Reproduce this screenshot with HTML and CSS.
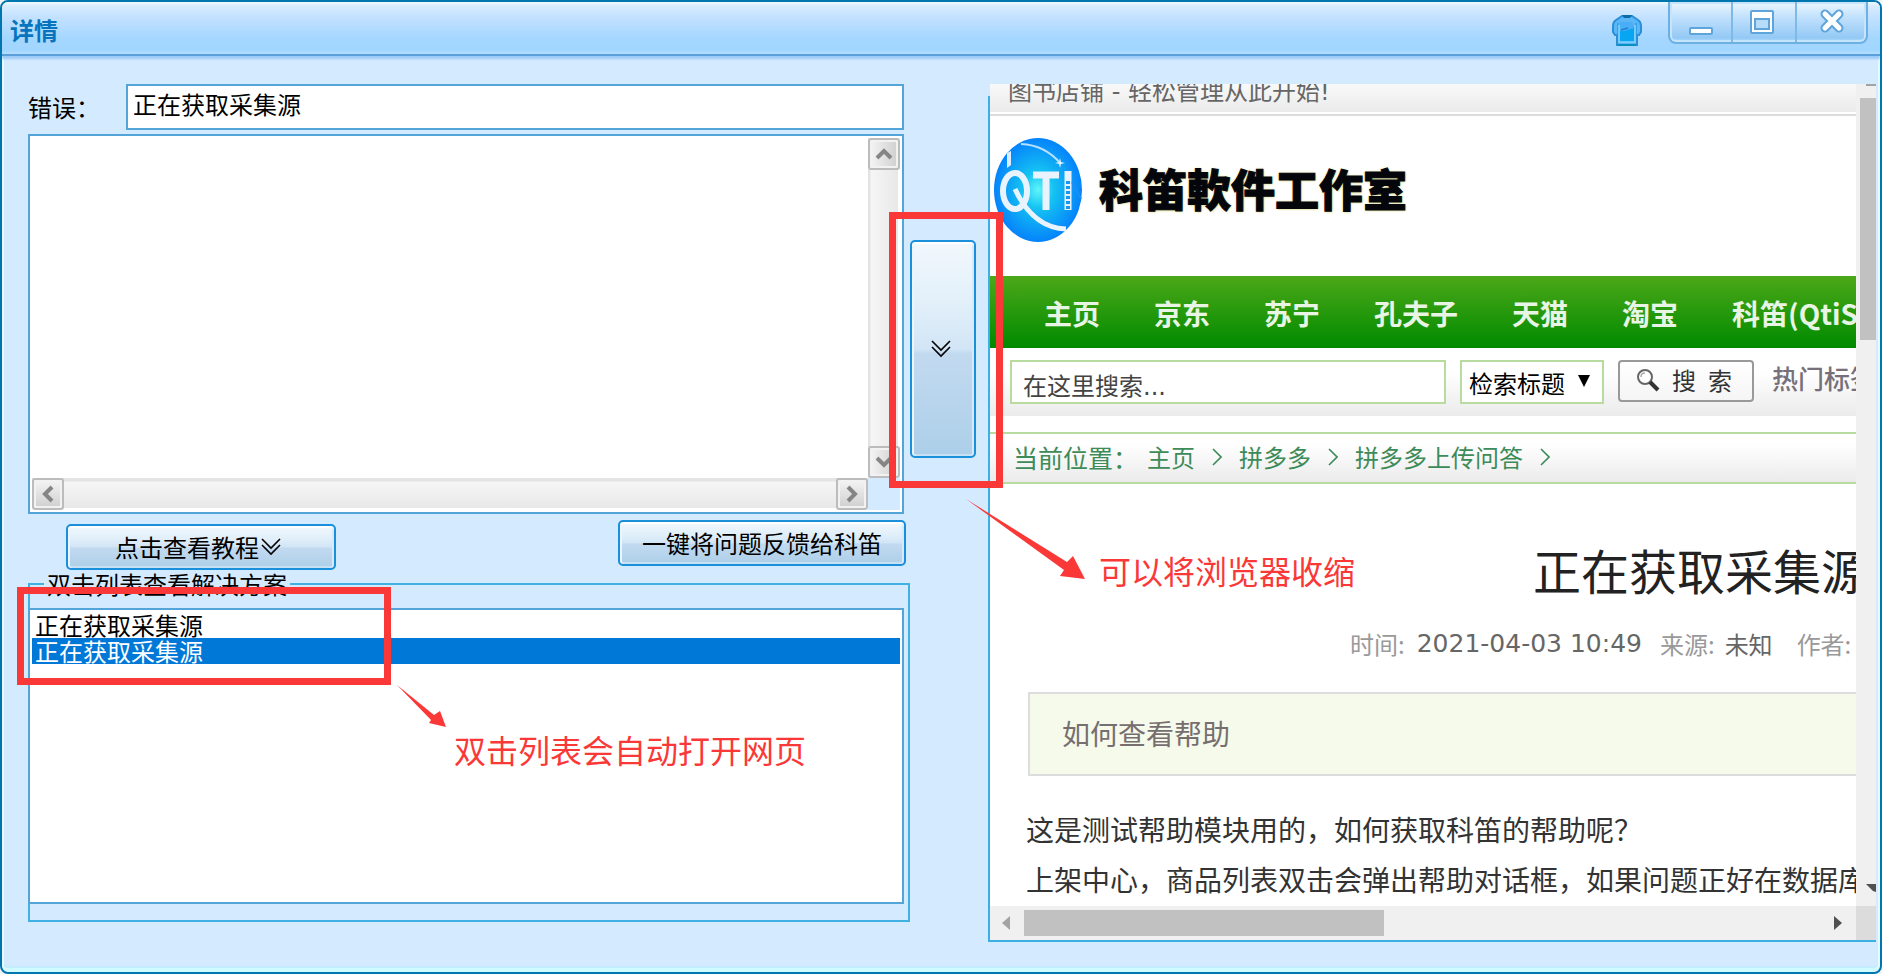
FILE: index.html
```html
<!DOCTYPE html>
<html lang="zh-CN">
<head>
<meta charset="utf-8">
<title>详情</title>
<link rel="stylesheet" href="styles.css">
</head>
<body>
<div class="window">
  <header class="titlebar">
    <h1 class="titlebar-text">详情</h1>
    <button class="skin" type="button" aria-label="换肤">
      <svg width="30" height="32" viewBox="0 0 30 32">
        <path d="M10 2 L4 6 Q1 8 1 12 V18 L3 21 H5 V31 H25 V21 H27 L29 18 V12 Q29 8 26 6 L20 2 Z" fill="#5ab6f6" stroke="#2a8fd6" stroke-width="2"/>
        <path d="M6 9 V22 M24 9 V22" stroke="#2a9be4" stroke-width="1.5"/>
        <rect x="8" y="12" width="14" height="16" fill="#08a6f2"/>
        <path d="M8 8 H20 L22 14 L12 17 H8 Z" fill="#4aaef6"/>
        <path d="M9 16 L16 14" stroke="#1c7fd0" stroke-width="1.5"/>
        <path d="M7 11 V28 H23 V11" fill="none" stroke="#8ad2fb" stroke-width="1.5"/>
        <path d="M10 1 H20 L18 4 H12 Z" fill="#0a6ca8"/>
        <path d="M6 31 H24" stroke="#078fc0" stroke-width="2"/>
      </svg>
    </button>
    <div class="window-buttons">
      <button class="window-button" type="button" aria-label="最小化">
        <svg width="26" height="26" viewBox="0 0 26 26"><rect x="2" y="19" width="22" height="6" rx="1" fill="#fff" stroke="#5fa5dc" stroke-width="2"/></svg>
      </button>
      <button class="window-button window-button-max" type="button" aria-label="最大化">
        <svg width="26" height="26" viewBox="0 0 26 26"><rect x="2" y="2" width="22" height="22" rx="1" fill="#fff" stroke="#5fa5dc" stroke-width="2"/><rect x="6" y="10" width="14" height="10" fill="#b7dcfa" stroke="#5fa5dc" stroke-width="2"/></svg>
      </button>
      <button class="window-button window-button-close" type="button" aria-label="关闭">
        <svg width="26" height="26" viewBox="0 0 26 26"><path d="M6 5 L20 19 M20 5 L6 19" stroke="#5fa5dc" stroke-width="9" stroke-linecap="round"/><path d="M6 5 L20 19 M20 5 L6 19" stroke="#fff" stroke-width="5" stroke-linecap="round"/></svg>
      </button>
    </div>
  </header>

  <main class="content">
    <section class="left">
      <div class="error-row">
        <label class="error-label" for="error">错误：</label>
        <input class="error-input" id="error" type="text" value="正在获取采集源">
      </div>
      <div class="log">
        <textarea class="log-text" aria-label="日志"></textarea>
        <div class="vbar">
          <button class="bar-button" type="button" aria-label="向上"><svg width="18" height="14" viewBox="0 0 18 14"><path d="M2 11 L9 4 L16 11" fill="none" stroke="#858585" stroke-width="4"/></svg></button>
          <button class="bar-button" type="button" aria-label="向下"><svg width="18" height="14" viewBox="0 0 18 14"><path d="M2 3 L9 10 L16 3" fill="none" stroke="#858585" stroke-width="4"/></svg></button>
        </div>
        <div class="hbar">
          <button class="bar-button" type="button" aria-label="向左"><svg width="14" height="18" viewBox="0 0 14 18"><path d="M11 2 L4 9 L11 16" fill="none" stroke="#858585" stroke-width="4"/></svg></button>
          <button class="bar-button" type="button" aria-label="向右"><svg width="14" height="18" viewBox="0 0 14 18"><path d="M3 2 L10 9 L3 16" fill="none" stroke="#858585" stroke-width="4"/></svg></button>
        </div>
      </div>
      <div class="actions">
        <button class="blue-button tutorial" type="button">点击查看教程<svg class="chevrons" width="20" height="18" viewBox="0 0 20 18"><path d="M1 1 L10 10 L19 1 M1 7 L10 16 L19 7" fill="none" stroke="#000" stroke-width="1.6"/></svg></button>
        <button class="blue-button feedback" type="button">一键将问题反馈给科笛</button>
      </div>
      <fieldset class="group">
        <legend class="group-title">双击列表查看解决方案</legend>
        <ul class="list">
          <li class="row">正在获取采集源</li>
          <li class="row row-selected">正在获取采集源</li>
        </ul>
      </fieldset>
    </section>

    <div class="divider">
      <button class="blue-button collapse" type="button" aria-label="收缩浏览器"><svg width="20" height="18" viewBox="0 0 20 18"><path d="M1 1 L10 10 L19 1 M1 7 L10 16 L19 7" fill="none" stroke="#000" stroke-width="1.6"/></svg></button>
    </div>

    <section class="browser">
      <div class="page">
        <div class="slogan"><span>图书店铺 - 轻松管理从此开始!</span></div>
        <div class="brand">
          <svg class="brand-logo" width="90" height="106" viewBox="0 0 90 106">
            <defs><radialGradient id="globe"><stop offset="0" stop-color="#5ff5fb"/><stop offset=".35" stop-color="#15c3f2"/><stop offset="1" stop-color="#0583fb"/></radialGradient></defs>
            <ellipse cx="45" cy="53" rx="44" ry="52" fill="url(#globe)"/>
            <path d="M28 7 Q52 8 68 27" fill="none" stroke="#b9e0ff" stroke-width="2"/>
            <path d="M14 16 L18 14 L18 28 L14 31 Z" fill="#dceeff"/>
            <path d="M67 21 L68 25 L72 26 L68 27 L67 31 L66 27 L62 26 L66 25 Z" fill="#d8f2ff"/>
            <ellipse cx="22" cy="54" rx="12" ry="18" fill="none" stroke="#e8f3fd" stroke-width="6"/>
            <path d="M22 52 Q40 91 73 92" fill="none" stroke="#e8f3fd" stroke-width="5"/>
            <path d="M40 38 H66 M53 38 V73" stroke="#e8f3fd" stroke-width="7"/>
            <path d="M75 34 V73" stroke="#e8f3fd" stroke-width="7"/>
            <path d="M75 44 V72" stroke="#1597f5" stroke-width="4" stroke-dasharray="3 2"/>
            <path d="M79 45 L88 62" stroke="#1c8df5" stroke-width="2"/>
          </svg>
          <span class="brand-name">科笛軟件工作室</span>
        </div>
        <nav class="nav">
          <a class="nav-link" href="#">主页</a><a class="nav-link" href="#">京东</a><a class="nav-link" href="#">苏宁</a><a class="nav-link" href="#">孔夫子</a><a class="nav-link" href="#">天猫</a><a class="nav-link" href="#">淘宝</a><a class="nav-link" href="#">科笛(QtiSoft)</a>
        </nav>
        <form class="search">
          <input class="search-input" type="text" aria-label="搜索" value="在这里搜索...">
          <div class="search-type">
            <select class="search-select" aria-label="检索范围"><option>检索标题</option></select>
            <svg class="search-arrow" width="12" height="12" viewBox="0 0 12 12"><path d="M0 0 H12 L6 12 Z"/></svg>
          </div>
          <button class="search-button" type="button">
            <svg width="24" height="24" viewBox="0 0 24 24"><circle cx="9" cy="9" r="7" fill="#fff" stroke="#666" stroke-width="2"/><path d="M5 9 Q5 5 9 5" fill="none" stroke="#aaa" stroke-width="1.5"/><path d="M14 14 L22 22" stroke="#333" stroke-width="4"/></svg>
            <span>搜</span><span>索</span>
          </button>
          <span class="hot">热门标签:</span>
        </form>
        <div class="crumbs">
          <span class="crumbs-label">当前位置：</span>
          <a class="crumb" href="#">主页</a>
          <svg class="crumb-sep" width="10" height="18" viewBox="0 0 10 18"><path d="M1 1 L9 9 L1 17" fill="none" stroke="#3d8b58" stroke-width="1.6"/></svg>
          <a class="crumb" href="#">拼多多</a>
          <svg class="crumb-sep" width="10" height="18" viewBox="0 0 10 18"><path d="M1 1 L9 9 L1 17" fill="none" stroke="#3d8b58" stroke-width="1.6"/></svg>
          <a class="crumb" href="#">拼多多上传问答</a>
          <svg class="crumb-sep" width="10" height="18" viewBox="0 0 10 18"><path d="M1 1 L9 9 L1 17" fill="none" stroke="#3d8b58" stroke-width="1.6"/></svg>
        </div>
        <article class="article">
          <h2 class="article-title">正在获取采集源</h2>
          <div class="meta">
            <span>时间:</span><b class="meta-date">2021-04-03 10:49</b>
            <span>来源:</span><b class="meta-value">未知</b>
            <span>作者:</span>
          </div>
          <div class="summary">如何查看帮助</div>
          <p class="paragraph">这是测试帮助模块用的，如何获取科笛的帮助呢？</p>
          <p class="paragraph">上架中心，商品列表双击会弹出帮助对话框，如果问题正好在数据库</p>
        </article>
      </div>
      <div class="page-vbar">
        <span class="page-vbar-top"></span>
        <span class="page-vthumb"></span>
        <svg class="page-down" width="10" height="8" viewBox="0 0 10 8"><path d="M0 0 H10 V8 L7 7 Z" fill="#505050"/></svg>
      </div>
      <div class="page-hbar">
        <svg width="8" height="14" viewBox="0 0 8 14"><path d="M8 0 V14 L0 7 Z" fill="#a3a3a3"/></svg>
        <span class="page-htrack"><span class="page-hthumb"></span></span>
        <svg width="8" height="14" viewBox="0 0 8 14"><path d="M0 0 V14 L8 7 Z" fill="#505050"/></svg>
      </div>
      <div class="page-corner"></div>
    </section>
  </main>

  <div class="mark mark-collapse"></div>
  <div class="mark mark-list"></div>
  <svg class="arrow arrow-collapse" width="120" height="82" viewBox="0 0 120 82"><path d="M0 0 L101 63 L107 57 L119 80 L94 77 L98 71 Z" fill="#fb3838"/></svg>
  <svg class="arrow arrow-list" width="50" height="43" viewBox="0 0 50 43"><path d="M0 0 L37 30 L43 26 L49 42 L32 38 L34 35 Z" fill="#fb3838"/></svg>
  <span class="note note-collapse">可以将浏览器收缩</span>
  <span class="note note-list">双击列表会自动打开网页</span>
</div>
</body>
</html>
```
FILE: styles.css
```css
* { box-sizing: border-box; }

body {
  margin: 0;
  background: #eef3f6;
  color: #000;
  font: 24px/28px "Noto Sans CJK SC", sans-serif;
}

button, input, select, textarea {
  margin: 0;
  padding: 0;
  border: 0;
  background: none;
  color: inherit;
  font: inherit;
  outline: 0;
}

button svg { flex: none; }
a { color: inherit; text-decoration: none; }

.window {
  position: relative;
  display: flex;
  flex-direction: column;
  min-height: 100vh;
  border: 2px solid #0076ae;
  border-radius: 8px;
  background: #d4eaff;
  box-shadow: inset 2px 0 #e8f8ff, inset -2px 0 #e8f8ff, inset 0 -4px #d0fbff, inset 0 -6px #c4ecff;
  overflow: hidden;
}

/* Title bar */
.titlebar {
  display: flex;
  align-items: center;
  height: 54px;
  padding: 0 12px 0 8px;
  border-bottom: 2px solid #5ba0da;
  background: linear-gradient(#f0faff 0, #d8ecff 4px, #c2e1ff 16px, #a5d7ff 36px, #a1d6ff 48px, #b4deff 52px);
  box-shadow: 0 3px 2px #9ccbf8;
}

.titlebar-text {
  flex: 1;
  margin: 0;
  padding-top: 4px;
  color: #0874bd;
  font-size: 24px;
  line-height: 28px;
}

.skin { display: flex; margin: 4px 26px 0 0; }

.window-buttons {
  display: flex;
  align-self: flex-start;
  height: 42px;
  border: 2px solid #6fb0e2;
  border-top: 0;
  border-radius: 0 0 8px 8px;
  background: linear-gradient(#ecf7ff, #bfe0fc 16px, #93c9f5 36px, #b5e0ff);
  box-shadow: inset 0 0 0 2px #c5e4fd;
}

.window-button {
  display: flex;
  justify-content: center;
  width: 61px;
  padding-top: 7px;
}

.window-button + .window-button { border-left: 2px solid #7fb9e6; }
.window-button-max { width: 64px; padding-right: 4px; }
.window-button-close { width: 71px; }

/* Main columns */
.content {
  flex: 1;
  display: grid;
  grid-template-columns: minmax(0, 882fr) 78px minmax(0, 888fr);
  padding: 28px 4px 30px 26px;
}

.left {
  display: flex;
  flex-direction: column;
  padding-bottom: 20px;
}

.error-row { display: flex; align-items: center; margin-right: 6px; }
.error-label { width: 98px; white-space: nowrap; }

.error-input {
  flex: 1;
  min-width: 0;
  height: 46px;
  padding: 0 5px 8px;
  border: 2px solid #53a4d8;
  background: #fff;
}

.log {
  display: grid;
  grid-template: 1fr 32px / 1fr 32px;
  height: 380px;
  margin: 4px 6px 0 0;
  padding: 2px;
  border: 2px solid #53a4d8;
  background: linear-gradient(#fff, #fff) padding-box;
}

.log-text { width: 100%; height: 100%; resize: none; }

.vbar, .hbar { display: flex; justify-content: space-between; }

.vbar {
  flex-direction: column;
  background: linear-gradient(90deg, #e4e4e4 2px, #f6f6f6 3px, #e8e8e8 30px, #fff 30px);
}

.hbar { background: linear-gradient(#e4e4e4 3px, #f6f6f6 4px, #e8e8e8 30px, #fff 30px); }

.bar-button {
  display: flex;
  align-items: center;
  justify-content: center;
  width: 32px;
  height: 32px;
  border: 2px solid #bcbcbc;
  border-radius: 3px;
  background: linear-gradient(90deg, #f4f4f4, #cfcfcf);
  box-shadow: inset 0 0 0 2px #f2f2f2;
}

.hbar .bar-button { background: linear-gradient(#f4f4f4, #cfcfcf); }

.log::after { content: ""; background: #d4eaff; }

.actions {
  display: flex;
  justify-content: space-between;
  align-items: flex-start;
  padding: 6px 4px 0 38px;
}

.blue-button {
  display: flex;
  align-items: center;
  justify-content: center;
  height: 46px;
  border: 2px solid #1a8fda;
  border-radius: 5px;
  background: linear-gradient(#f2f8fd, #e2f0fa 28%, #d2e5f6 50%, #c2daf0 52%, #adcfe9);
  box-shadow: inset 0 2px #fff, inset 2px 0 #eaf5fd, inset -2px 0 #d8eafa, inset 0 -2px #c8e0f4;
  white-space: nowrap;
}

.tutorial { width: 270px; margin-top: 4px; padding-right: 6px; }
.feedback { width: 288px; }
.chevrons { margin-left: 2px; }

.group {
  flex: 1;
  display: flex;
  flex-direction: column;
  min-width: 0;
  margin: 0;
  padding: 10px 4px 16px 0;
  border: 2px solid #41b0e2;
}

.group-title { margin-left: 14px; padding: 0 3px; white-space: nowrap; }

.list {
  flex: 1;
  margin: 0 0 0 -2px;
  padding: 2px;
  border: 2px solid #53a4d8;
  background: #fff;
  list-style: none;
}

.row { padding-left: 3px; line-height: 26px; }
.row-selected { background: #0078d7; color: #fff; }

.divider { padding: 156px 12px 0 0; }
.collapse { width: 66px; height: 218px; padding-right: 4px; }

/* Embedded browser */
.browser {
  display: grid;
  grid-template: minmax(0, 1fr) 34px / minmax(0, 1fr) 20px;
  border: solid #3cb0e2;
  border-width: 0 0 2px 2px;
  border-image: linear-gradient(#d4eaff 12px, #3cb0e2 12px) 0 0 2 2;
}

.page { overflow: hidden; background: #fff; white-space: nowrap; }

.slogan {
  display: flex;
  align-items: flex-end;
  height: 32px;
  padding: 0 18px 8px;
  border-bottom: 2px solid #dcdcdc;
  background: linear-gradient(#f9f9f9, #ebebeb 28px, #fff 28px);
  color: #666;
  font-family: "DejaVu Sans", "Noto Sans CJK SC", sans-serif;
}

.brand {
  display: flex;
  align-items: center;
  gap: 16px;
  height: 160px;
  padding: 0 0 12px 3px;
}

.brand-name {
  padding-bottom: 4px;
  color: #05050c;
  font: 900 44px/48px "Noto Sans CJK TC", sans-serif;
  -webkit-text-stroke: 1px #05050c;
  text-shadow: 0 0 3px #dcdc90, 1px 1px 2px #e4e4ac;
}

.nav {
  display: flex;
  align-items: center;
  gap: 54px;
  height: 72px;
  padding: 2px 54px 0;
  background: linear-gradient(#4ca818, #008a00);
  color: #e8f4e4;
  font-size: 28px;
  font-weight: 700;
}

.search {
  display: flex;
  align-items: flex-start;
  gap: 14px;
  height: 68px;
  padding: 12px 20px 0;
  background: linear-gradient(#fff 35%, #ebebeb);
}

.search-input, .search-select {
  flex: none;
  height: 44px;
  border: 2px solid #b8dba0;
  background: #fff;
}

.search-input {
  width: 436px;
  padding: 4px 11px 0;
  color: #444;
  font-family: "DejaVu Sans", "Noto Sans CJK SC", sans-serif;
}

.search-type { position: relative; flex: none; }
.search-select { width: 144px; padding: 2px 7px 0; appearance: none; color: #000; }
.search-arrow { position: absolute; right: 14px; top: 15px; pointer-events: none; }

.search-button {
  flex: none;
  display: flex;
  align-items: center;
  gap: 12px;
  width: 136px;
  height: 42px;
  padding: 0 0 2px 16px;
  border: 2px solid #999;
  border-radius: 4px;
  background: linear-gradient(#fff, #f5f5f5);
  color: #333;
}

.hot { padding: 4px 0 0 4px; color: #77707a; font-size: 26px; font-weight: 500; }

.crumbs {
  display: flex;
  align-items: center;
  height: 52px;
  margin-top: 16px;
  padding: 0 0 2px 23px;
  border: solid #b8dba0;
  border-width: 2px 0;
  background: linear-gradient(#fff 20%, #ebebeb);
  color: #3d8b58;
}

.crumbs-label { width: 134px; font-size: 25px; }
.crumb-sep { margin: 0 17px; }

.article { padding: 56px 0 0 36px; }

.article-title {
  margin: 0 0 0 507px;
  color: #222;
  font-size: 48px;
  font-weight: 400;
  line-height: 58px;
}

.meta {
  display: flex;
  padding: 32px 0 0 324px;
  color: #999;
}

.meta-date, .meta-value { color: #666; font-weight: 400; }
.meta-date { margin: 0 18px 0 12px; font-family: "DejaVu Sans", sans-serif; font-size: 25px; }
.meta-value { margin: 0 24px 0 10px; }

.summary {
  height: 84px;
  margin: 34px 0 28px 2px;
  padding: 0 32px;
  border: 2px solid #ddd;
  border-right: 0;
  background: #f5faeb;
  color: #776e70;
  font-size: 28px;
  line-height: 78px;
}

.paragraph { margin: 0; color: #333; font-size: 28px; line-height: 50px; }

.page-vbar {
  display: flex;
  flex-direction: column;
  align-items: flex-end;
  background: #f0f0f0;
}

.page-vbar-top { width: 10px; height: 2px; margin-bottom: 12px; background: #a3a3a3; }
.page-vthumb { width: 16px; height: 242px; background: #c1c1c1; }
.page-down { margin: auto 0 14px; }

.page-hbar {
  display: flex;
  align-items: center;
  gap: 14px;
  padding: 0 14px 0 12px;
  background: #f0f0f0;
}

.page-htrack { flex: 1; }
.page-hthumb { display: block; width: 360px; max-width: 100%; height: 26px; background: #c1c1c1; }
.page-corner { background: #dcdcdc; }

/* Annotations laid over the window */
.mark { position: absolute; border: 7px solid #fb3838; pointer-events: none; }
.mark-collapse { left: 887px; top: 210px; width: 114px; height: 276px; }
.mark-list { left: 15px; top: 585px; width: 374px; height: 98px; }
.arrow { position: absolute; }
.arrow-collapse { left: 964px; top: 497px; }
.arrow-list { left: 395px; top: 683px; }

.note {
  position: absolute;
  color: #fb3838;
  font-size: 32px;
  line-height: 40px;
  white-space: nowrap;
}

.note-collapse { left: 1097px; top: 548px; }
.note-list { left: 452px; top: 727px; }
```
